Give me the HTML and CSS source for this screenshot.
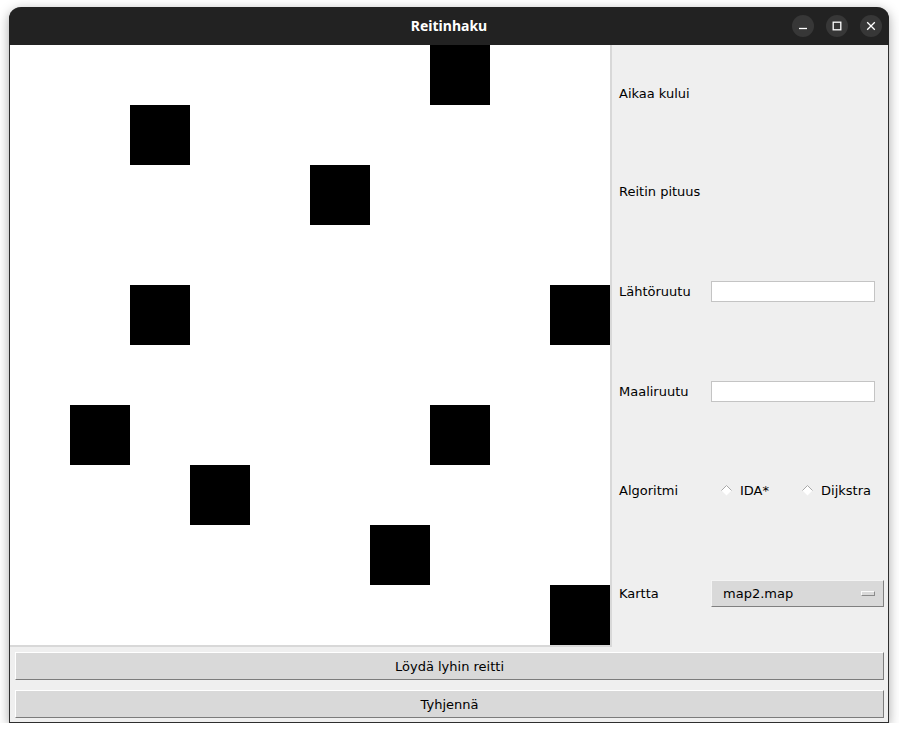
FILE: index.html
```html
<!DOCTYPE html>
<html>
<head>
<meta charset="utf-8">
<link rel="stylesheet" href="styles.css">
</head>
<body>
<div class="window">
  <div class="titlebar">
    <div class="title">Reitinhaku</div>
    <div class="controls">
      <span class="ctl"><svg width="10" height="10" viewBox="0 0 10 10"><line x1="1" y1="7.5" x2="9" y2="7.5" stroke="#fff" stroke-width="1.3"/></svg></span>
      <span class="ctl"><svg width="10" height="10" viewBox="0 0 10 10"><rect x="1.2" y="1.2" width="7.6" height="7.6" fill="none" stroke="#fff" stroke-width="1.3"/></svg></span>
      <span class="ctl"><svg width="10" height="10" viewBox="0 0 10 10"><path d="M1.2 1.2 L8.8 8.8 M8.8 1.2 L1.2 8.8" stroke="#fff" stroke-width="1.3"/></svg></span>
    </div>
  </div>
  <div class="content">
    <div class="top">
      <div class="canvas">
        <div class="sq" style="grid-area:1/8"></div>
        <div class="sq" style="grid-area:2/3"></div>
        <div class="sq" style="grid-area:3/6"></div>
        <div class="sq" style="grid-area:5/3"></div>
        <div class="sq" style="grid-area:5/10"></div>
        <div class="sq" style="grid-area:7/2"></div>
        <div class="sq" style="grid-area:7/8"></div>
        <div class="sq" style="grid-area:8/4"></div>
        <div class="sq" style="grid-area:9/7"></div>
        <div class="sq" style="grid-area:10/10"></div>
      </div>
      <div class="panel">
        <div class="row r1"><span class="lbl">Aikaa kului</span></div>
        <div class="row r2"><span class="lbl">Reitin pituus</span></div>
        <div class="row r3"><span class="lbl">Lähtöruutu</span><input class="entry" type="text"></div>
        <div class="row r4"><span class="lbl">Maaliruutu</span><input class="entry" type="text"></div>
        <div class="row r5"><span class="lbl">Algoritmi</span>
          <div class="radios">
            <span class="radio"><svg width="11" height="11" viewBox="0 0 11 11"><polygon points="5.5,0.5 10.5,5.5 5.5,10.5 0.5,5.5" fill="#fff"/><path d="M0.5 5.5 L5.5 0.5 L10.5 5.5" fill="none" stroke="#a8a8a8" stroke-width="1"/></svg>IDA*</span>
            <span class="radio"><svg width="11" height="11" viewBox="0 0 11 11"><polygon points="5.5,0.5 10.5,5.5 5.5,10.5 0.5,5.5" fill="#fff"/><path d="M0.5 5.5 L5.5 0.5 L10.5 5.5" fill="none" stroke="#a8a8a8" stroke-width="1"/></svg>Dijkstra</span>
          </div>
        </div>
        <div class="row r6"><span class="lbl">Kartta</span>
          <div class="option"><span>map2.map</span><span class="ind"></span></div>
        </div>
      </div>
    </div>
    <div class="buttons">
      <div class="btn">Löydä lyhin reitti</div>
      <div class="btn">Tyhjennä</div>
    </div>
  </div>
</div>
</body>
</html>
```
FILE: styles.css
```css
html, body {
  margin: 0;
  padding: 0;
  background: #ffffff;
  font-family: "DejaVu Sans", sans-serif;
  font-size: 13px;
  color: #000;
}
.window {
  margin: 7px 0 0 9px;
  width: 880px;
  height: 716px;
  box-sizing: border-box;
  border: 1px solid #2e2e2e;
  border-top: none;
  border-radius: 12px 12px 0 0;
  box-shadow: 0 3px 12px rgba(0,0,0,0.35);
  display: flex;
  flex-direction: column;
  background: #efefef;
}
.titlebar {
  height: 38px;
  margin: 0 -1px;
  background: #222222;
  border-radius: 12px 12px 0 0;
  position: relative;
  display: flex;
  align-items: center;
  justify-content: center;
  flex: none;
}
.title {
  font-family: "Noto Sans", "Open Sans", sans-serif;
  font-weight: bold;
  font-size: 14px;
  color: #ffffff;
  margin-top: -1px;
}
.controls {
  position: absolute;
  right: 7px;
  top: 8px;
  display: flex;
  gap: 12px;
}
.ctl {
  width: 22px;
  height: 22px;
  border-radius: 50%;
  background: #373737;
  display: flex;
  align-items: center;
  justify-content: center;
}
.content {
  flex: 1;
  display: flex;
  flex-direction: column;
}
.top {
  display: flex;
  height: 602px;
}
.canvas {
  width: 600px;
  height: 600px;
  background: #ffffff;
  border-right: 2px solid #d8d8d8;
  border-bottom: 2px solid #d8d8d8;
  display: grid;
  grid-template-columns: repeat(10, 60px);
  grid-template-rows: repeat(10, 60px);
  flex: none;
}
.sq {
  background: #000;
}
.panel {
  flex: 1;
  display: grid;
  grid-template-rows: 96px 100px 100px 100px 98px 108px;
  padding-left: 7px;
}
.row {
  display: flex;
  align-items: center;
}
.lbl {
  width: 92px;
  flex: none;
}
.entry {
  width: 164px;
  height: 21px;
  box-sizing: border-box;
  border: 1px solid #c4c4c4;
  background: #fff;
  margin: 0;
  padding: 0;
  outline: none;
}
.radios {
  display: flex;
  margin-left: 10px;
}
.radio {
  display: flex;
  align-items: center;
  gap: 8px;
}
.radio + .radio {
  margin-left: 33px;
}
.option {
  width: 173px;
  height: 27px;
  box-sizing: border-box;
  background: #d9d9d9;
  border: 1px solid;
  border-color: #f4f4f4 #808080 #808080 #f4f4f4;
  display: flex;
  align-items: center;
  justify-content: space-between;
  padding: 0 8px 0 11px;
  margin-top: 1px;
}
.ind {
  width: 14px;
  height: 5px;
  box-sizing: border-box;
  border: 1px solid;
  border-color: #fafafa #8a8a8a #8a8a8a #fafafa;
  background: #d9d9d9;
}
.buttons {
  display: flex;
  flex-direction: column;
  gap: 10px;
  padding: 5px 4px 0 5px;
}
.btn {
  height: 28px;
  box-sizing: border-box;
  background: #d9d9d9;
  border: 1px solid;
  border-color: #ffffff #7c7c7c #7c7c7c #ffffff;
  display: flex;
  align-items: center;
  justify-content: center;
}
```
